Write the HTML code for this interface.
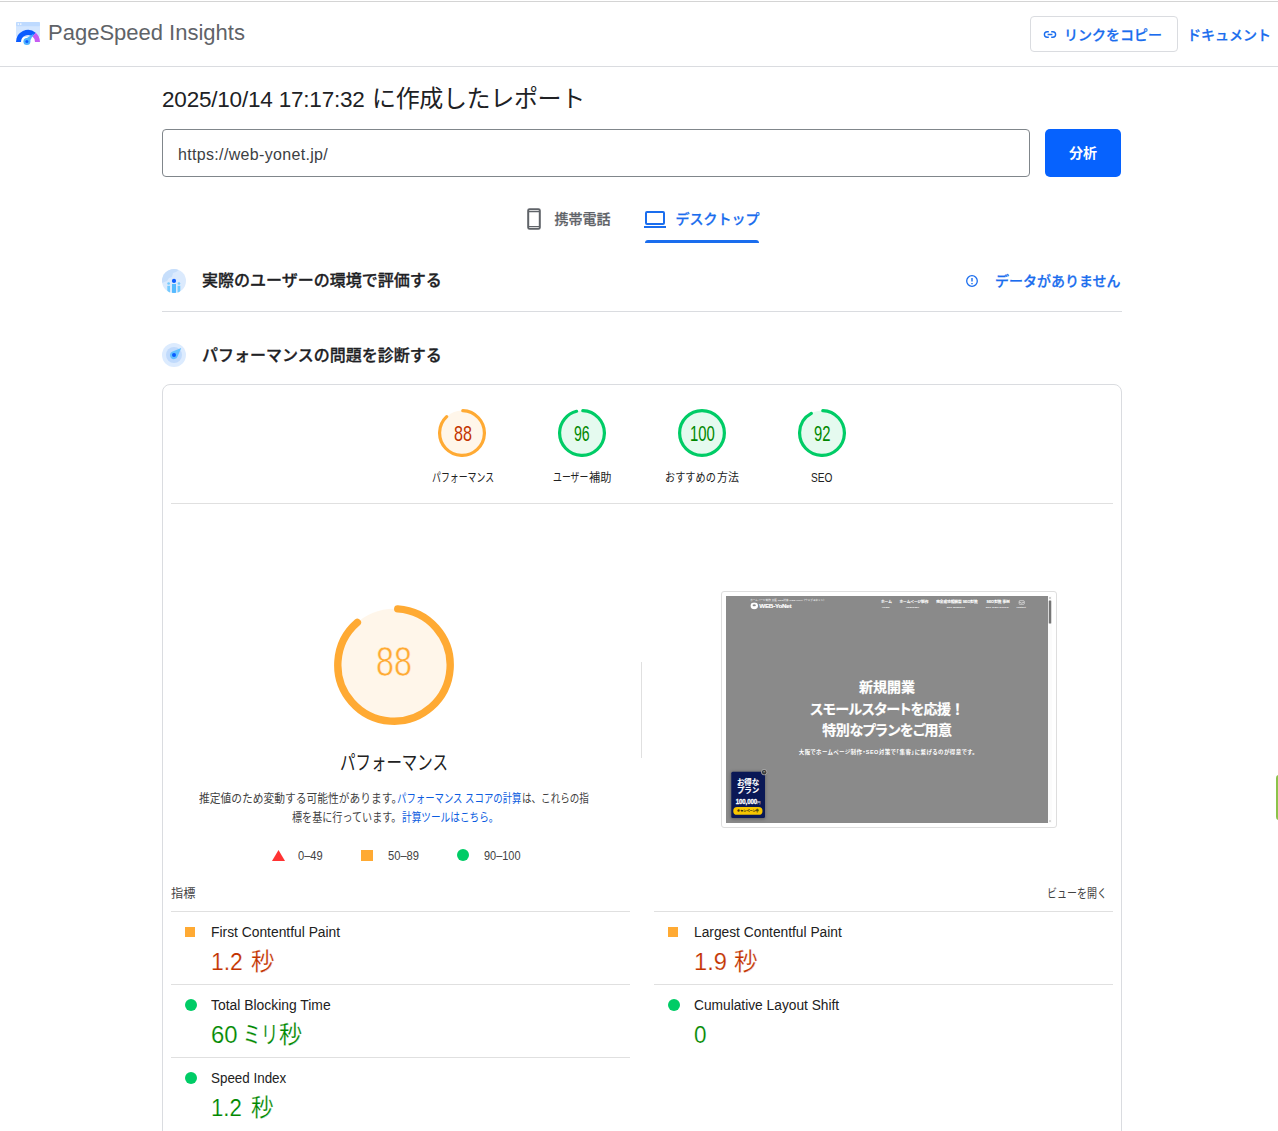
<!DOCTYPE html>
<html lang="ja">
<head>
<meta charset="utf-8">
<title>PageSpeed Insights</title>
<style>
*{box-sizing:border-box;margin:0;padding:0}
html,body{width:1278px;height:1131px;overflow:hidden;background:#fff}
body{position:relative;font-family:"Liberation Sans","Noto Sans CJK JP",sans-serif;color:#202124}
.abs{position:absolute;white-space:nowrap}
.topline{left:0;top:1px;width:1278px;height:1px;background:#d4d4d4}
.hdr{left:0;top:0;width:1278px;height:67px;border-bottom:1px solid #dadce0}
.brand{left:48px;top:19px;font-size:22px;line-height:28px;color:#5f6368}
.btn-copy{left:1030px;top:16px;width:148px;height:36px;border:1px solid #dadce0;border-radius:4px}
.blue{color:#1a6dee}
.t14m{font-size:14px;font-weight:500;line-height:20px;-webkit-text-stroke:.25px}
.title{left:162px;top:83px;font-size:24px;line-height:32px;color:#202124}
.urlbox{left:162px;top:129px;width:868px;height:48px;border:1px solid #80868b;border-radius:4px}
.url{left:178px;top:145px;font-size:16px;line-height:20px;color:#3c4043;letter-spacing:.33px}
.analyze{left:1045px;top:129px;width:76px;height:48px;background:#0662fe;border-radius:5px;color:#fff;font-size:14px;font-weight:700;line-height:48px;text-align:center}
.tabline{left:645px;top:240px;width:114px;height:3px;background:#1a6dee;border-radius:3px 3px 0 0}
.sect{font-size:16px;font-weight:500;line-height:24px;color:#202124;-webkit-text-stroke:.3px}
.hr{height:1px;background:#dadce0}
.card{left:162px;top:384px;width:960px;height:800px;border:1px solid #dadce0;border-radius:8px}
.lh{font-family:"Liberation Sans","Noto Sans CJK JP",sans-serif}
.glabel{font-size:12px;line-height:16px;color:#212121;text-align:center;transform-origin:50% 50%}
.gnum{font-size:21.5px;line-height:24px;text-align:center}
.mtitle{font-size:14px;line-height:20px;color:#212121}
.mval{font-size:24px;line-height:30px;-webkit-text-stroke:.2px #fff}
.avg{color:#c33300}
.pass{color:#080}
.sq{width:11px;height:11px;background:#ffa400}
.dot{width:12px;height:12px;background:#0cce6b;border-radius:50%}
.sx{transform-origin:0 50%}
.desc{font-size:12px;line-height:16px;color:#424242}
.lnk{color:#0b5ce0}
.leg{font-size:12px;line-height:16px;color:#424242}
.msep{width:459px;height:1px;background:#e0e0e0}
.mdot{width:12px;height:12px;border-radius:50%;background:#0c6}
.thumb{left:726px;top:596px;width:1304px;height:908px;overflow:hidden;transform:scale(.25);transform-origin:0 0;font-family:"Liberation Sans","Noto Sans CJK JP",sans-serif}
.tw{color:#fff}
.nav{top:14px;font-size:14.5px;line-height:18px;font-weight:700;-webkit-text-stroke:.4px}
.navs{top:39px;font-size:9.5px;line-height:12px;font-weight:700;letter-spacing:.5px}
.hl{left:0;width:1288px;text-align:center;font-size:56px;line-height:76px;font-weight:700;font-feature-settings:"palt" 1;-webkit-text-stroke:.8px}
.bd{left:21px;width:135px;text-align:center;font-weight:700}
</style>
<style id="pos">
#g1{left:453.6px;top:421.9px;transform:scaleX(0.752)}
#g2{left:574.1px;top:421.9px;transform:scaleX(0.654)}
#g3{left:689.7px;top:421.9px;transform:scaleX(0.691)}
#g4{left:813.5px;top:421.9px;transform:scaleX(0.688)}
#gl1{left:431.7px;top:469.9px;transform:scaleX(0.741)}
#gl2a{left:552.7px;top:469.9px;transform:scaleX(0.740)}
#gl2b{left:588.9px;top:469.9px;transform:scaleX(0.929)}
#gl3a{left:664.5px;top:469.9px;transform:scaleX(0.848)}
#gl3b{left:716.5px;top:469.9px;transform:scaleX(0.912)}
#gl4{left:811.2px;top:469.9px;transform:scaleX(0.844)}
#bignum{left:375.7px;top:636.5px;transform:scaleX(0.769)}
#bigtitle{left:340.0px;top:750.0px;transform:scaleX(0.773)}
#d1a{left:199.0px;top:790.8px;transform:scaleX(0.896)}
#d1b{left:397.1px;top:790.8px;transform:scaleX(0.782)}
#d1c{left:521.9px;top:790.8px;transform:scaleX(0.796)}
#d2a{left:292.0px;top:810.3px;transform:scaleX(0.840)}
#d2b{left:402.4px;top:810.3px;transform:scaleX(0.804)}
#lg1{left:298.1px;top:848.3px;transform:scaleX(0.926)}
#lg2{left:388.0px;top:848.3px;transform:scaleX(0.930)}
#lg3{left:483.9px;top:848.3px;transform:scaleX(0.912)}
#mh1{left:171.0px;top:886.0px;transform:scaleX(1.017)}
#mh2{left:1046.7px;top:886.0px;transform:scaleX(0.834)}
#m1t{left:210.6px;top:922.0px;transform:scaleX(0.988)}
#m1v{left:211.0px;top:946.8px;transform:scaleX(0.955)}
#m1u{left:251.0px;top:947.2px;transform:scaleX(0.978)}
#m2t{left:693.6px;top:922.0px;transform:scaleX(0.984)}
#m2v{left:694.0px;top:946.8px;transform:scaleX(0.987)}
#m2u{left:734.0px;top:947.2px;transform:scaleX(0.983)}
#m3t{left:210.8px;top:995.0px;transform:scaleX(0.992)}
#m3v{left:210.5px;top:1019.8px;transform:scaleX(0.996)}
#m3k{left:243.2px;top:1020.2px;transform:scaleX(0.737)}
#m3u{left:278.6px;top:1020.2px;transform:scaleX(0.962)}
#m4t{left:694.4px;top:995.0px;transform:scaleX(0.982)}
#m4v{left:694.2px;top:1019.8px;transform:scaleX(0.938)}
#m5t{left:210.5px;top:1068.0px;transform:scaleX(0.957)}
#m5v{left:211.1px;top:1092.8px;transform:scaleX(0.925)}
#m5u{left:251.0px;top:1093.2px;transform:scaleX(0.938)}
</style>
</head>
<body>
<!-- header -->
<div class="abs hdr"></div>
<div class="abs topline"></div>
<svg class="abs" style="left:16px;top:22px" width="24" height="24" viewBox="0 0 24 24">
  <rect x="0" y="0" width="24" height="15" rx="1.2" fill="#d3e6ff"/>
  <rect x="0" y="0" width="24" height="4.2" rx="1.2" fill="#bedaff"/>
  <circle cx="2.3" cy="2.1" r="0.8" fill="#fff"/><circle cx="4.8" cy="2.1" r="0.8" fill="#fff"/>
  <path d="M2.500 20 A9.500 9.500 0 0 1 18.100 12.700" fill="none" stroke="#0b5cff" stroke-width="5"/>
  <path d="M18.100 12.700 A9.500 9.500 0 0 1 21.500 20" fill="none" stroke="#c65cf2" stroke-width="5"/>
  <path d="M17.900 11.500 L13.300 20.300 L9.400 17.100 Z" fill="#4fb3ff"/>
  <circle cx="10.900" cy="19.600" r="3.500" fill="#4fb3ff"/>
  <circle cx="10.900" cy="19.600" r="1.500" fill="#0b5cff"/>
</svg>
<div class="abs brand" id="brand">PageSpeed Insights</div>
<div class="abs btn-copy"></div>
<svg class="abs" style="left:1042.5px;top:29.5px" width="14" height="9" viewBox="0 0 14 9"><path d="M5.800 1.700H4.200a2.800 2.800 0 0 0 0 5.600h1.600M8.200 1.700h1.600a2.800 2.800 0 0 1 0 5.600H8.200M4.600 4.500h4.800" fill="none" stroke="#1a6dee" stroke-width="1.4"/></svg>
<div class="abs t14m blue" id="copy" style="left:1064px;top:25px">リンクをコピー</div>
<div class="abs t14m blue" id="docs" style="left:1187px;top:25px">ドキュメント</div>

<!-- title / url -->
<div class="abs title" id="title"><span id="tl" style="font-size:22.5px;letter-spacing:-.2px">2025/10/14 17:17:32</span><span id="tj" class="abs" style="left:210px;top:0;letter-spacing:-.35px">に作成したレポート</span></div>
<div class="abs urlbox"></div>
<div class="abs url" id="url">https://web-yonet.jp/</div>
<div class="abs analyze" id="analyze">分析</div>

<!-- tabs -->
<svg class="abs" style="left:526px;top:208px" width="16" height="22" viewBox="0 0 16 22"><rect x="2.200" y="1.200" width="11.600" height="19.600" rx="1.400" fill="none" stroke="#5f6368" stroke-width="2"/><path d="M2 3.550h12M2 18.450h12" stroke="#5f6368" stroke-width="1.150"/></svg>
<div class="abs t14m" id="tab1" style="left:554.5px;top:209px;color:#5f6368">携帯電話</div>
<svg class="abs" style="left:643px;top:210px" width="24" height="19" viewBox="0 0 24 19"><rect x="3" y="2" width="18" height="12" rx="1" fill="none" stroke="#1a6dee" stroke-width="2"/><path d="M1 17h22" stroke="#1a6dee" stroke-width="2"/></svg>
<div class="abs t14m blue" id="tab2" style="left:675.5px;top:209px">デスクトップ</div>
<div class="abs tabline"></div>

<!-- section headers -->
<svg class="abs" style="left:162px;top:269px" width="24" height="24" viewBox="0 0 24 24">
  <defs><clipPath id="c1"><circle cx="12" cy="12" r="12"/></clipPath></defs>
  <circle cx="12" cy="12" r="12" fill="#dbeafd"/>
  <g clip-path="url(#c1)">
    <path d="M0 0H18L14 3 11 4 10 8 7 9 5 12 0 14Z" fill="#c6defb"/>
    <rect x="5.300" y="16.800" width="2.700" height="8" fill="#74caff"/><circle cx="6.650" cy="14.500" r="1.350" fill="#74caff"/>
    <rect x="15.600" y="16.800" width="2.700" height="8" fill="#74caff"/><circle cx="16.950" cy="14.500" r="1.350" fill="#74caff"/>
    <rect x="10" y="15" width="4" height="10" fill="#55baff"/>
    <circle cx="12" cy="11.900" r="2.100" fill="#0b5cff"/>
  </g>
</svg>
<div class="abs sect" id="s1" style="left:202px;top:269px">実際のユーザーの環境で評価する</div>
<svg class="abs" style="left:965px;top:274px" width="14" height="14" viewBox="0 0 14 14"><circle cx="7" cy="7" r="5.3" fill="none" stroke="#1a6dee" stroke-width="1.3"/><path d="M7 4v3.6M7 9v1.3" stroke="#1a6dee" stroke-width="1.4"/></svg>
<div class="abs t14m blue" id="nodata" style="left:995px;top:271px">データがありません</div>
<div class="abs hr" style="left:162px;top:311px;width:960px"></div>

<svg class="abs" style="left:162px;top:343px" width="24" height="24" viewBox="0 0 24 24">
  <circle cx="12" cy="12" r="12" fill="#dcebfe"/>
  <circle cx="12" cy="12" r="8" fill="#c0dafc"/>
  <path d="M19.2 5 L15.6 13.6 A4 4 0 1 1 10.6 8.4 Z" fill="#62c0ff"/>
  <circle cx="12" cy="12" r="2" fill="#0b5cff"/>
</svg>
<div class="abs sect" id="s2" style="left:202px;top:344px">パフォーマンスの問題を診断する</div>

<div class="abs card"></div>
<!-- score gauges row -->
<svg class="abs" style="left:438px;top:409px" width="48" height="48" viewBox="0 0 120 120"><circle cx="60" cy="60" r="56" fill="#fa3" opacity=".1"/><circle cx="60" cy="60" r="56" fill="none" stroke="#fa3" stroke-width="8" stroke-linecap="round" stroke-dasharray="305.6 352" transform="rotate(-87.95 60 60)"/></svg>
<svg class="abs" style="left:558px;top:409px" width="48" height="48" viewBox="0 0 120 120"><circle cx="60" cy="60" r="56" fill="#0c6" opacity=".1"/><circle cx="60" cy="60" r="56" fill="none" stroke="#0c6" stroke-width="8" stroke-linecap="round" stroke-dasharray="333.8 352" transform="rotate(-87.95 60 60)"/></svg>
<svg class="abs" style="left:678px;top:409px" width="48" height="48" viewBox="0 0 120 120"><circle cx="60" cy="60" r="56" fill="#0c6" opacity=".1"/><circle cx="60" cy="60" r="56" fill="none" stroke="#0c6" stroke-width="8"/></svg>
<svg class="abs" style="left:798px;top:409px" width="48" height="48" viewBox="0 0 120 120"><circle cx="60" cy="60" r="56" fill="#0c6" opacity=".1"/><circle cx="60" cy="60" r="56" fill="none" stroke="#0c6" stroke-width="8" stroke-linecap="round" stroke-dasharray="319.7 352" transform="rotate(-87.95 60 60)"/></svg>
<span class="abs sx gnum avg" id="g1">88</span>
<span class="abs sx gnum pass" id="g2">96</span>
<span class="abs sx gnum pass" id="g3">100</span>
<span class="abs sx gnum pass" id="g4">92</span>
<span class="abs sx glabel" id="gl1">パフォーマンス</span>
<span class="abs sx glabel" id="gl2a">ユーザー</span><span class="abs sx glabel" id="gl2b">補助</span>
<span class="abs sx glabel" id="gl3a">おすすめの</span><span class="abs sx glabel" id="gl3b">方法</span>
<span class="abs sx glabel" id="gl4">SEO</span>
<div class="abs" style="left:171px;top:503px;width:942px;height:1px;background:#e0e0e0"></div>

<!-- big gauge -->
<svg class="abs" style="left:333.5px;top:604.5px" width="120" height="120" viewBox="0 0 120 120"><circle cx="60" cy="60" r="56.2" fill="#fa3" opacity=".1"/><circle cx="60" cy="60" r="56.2" fill="none" stroke="#fa3" stroke-width="7.4" stroke-linecap="round" stroke-dasharray="309 354" transform="rotate(-86.2 60 60)"/></svg>
<span class="abs sx" id="bignum" style="font-size:42px;line-height:50px;color:#fa3;-webkit-text-stroke:.55px #fff6ea">88</span>
<span class="abs sx" id="bigtitle" style="font-size:20px;line-height:26px;color:#212121">パフォーマンス</span>
<span class="abs sx desc" id="d1a">推定値のため変動する可能性があります。</span>
<span class="abs sx desc lnk" id="d1b">パフォーマンス スコアの計算</span>
<span class="abs sx desc" id="d1c">は、これらの指</span>
<span class="abs sx desc" id="d2a">標を基に行っています。</span>
<span class="abs sx desc lnk" id="d2b">計算ツールはこちら。</span>
<svg class="abs" style="left:271.5px;top:849.5px" width="13" height="11" viewBox="0 0 13 11"><path d="M6.5 0L13 11H0Z" fill="#f33"/></svg>
<div class="abs" style="left:361px;top:850px;width:12px;height:11px;background:#fa3"></div>
<div class="abs" style="left:457px;top:849px;width:12px;height:12px;border-radius:50%;background:#0c6"></div>
<span class="abs sx leg" id="lg1">0–49</span>
<span class="abs sx leg" id="lg2">50–89</span>
<span class="abs sx leg" id="lg3">90–100</span>
<div class="abs" style="left:641px;top:662px;width:1px;height:96px;background:#e0e0e0"></div>

<!-- final screenshot thumbnail -->
<div class="abs" style="left:721px;top:591px;width:336px;height:237px;border:1px solid #dedede;border-radius:3px;background:#fff"></div>
<div class="abs thumb" id="thumb">
  <div class="abs" style="left:0;top:0;width:1288px;height:908px;background:#8a8a8a"></div>
  <div class="abs tw" style="left:97px;top:9px;font-size:10px;line-height:12px;letter-spacing:.4px">ホームページ制作 大阪 SEO対策 WEBYoNet（ウェブヨネット）</div>
  <svg class="abs" style="left:97px;top:25px" width="32" height="30" viewBox="0 0 32 30"><ellipse cx="16" cy="14" rx="15" ry="13.5" fill="#fff"/><path d="M9 11q7-7 14 0q-3 8-7 4q-4 4-7-4z" fill="#8a8a8a"/><path d="M12 27l4-5 4 5z" fill="#fff"/></svg>
  <div class="abs tw" id="tlogo" style="left:133px;top:24px;font-size:25px;line-height:32px;font-weight:700;letter-spacing:-.9px;-webkit-text-stroke:.6px">WEB-YoNet</div>
  <div class="abs tw nav" id="n1" style="left:620px">ホーム</div><div class="abs tw navs" id="n1s" style="left:624px">HOME</div>
  <div class="abs tw nav" id="n2" style="left:694px">ホームページ制作</div><div class="abs tw navs" id="n2s" style="left:720px">Homepage</div>
  <div class="abs tw nav" id="n3" style="left:841px">完全成功報酬型 SEO対策</div><div class="abs tw navs" id="n3s" style="left:883px">SEO measures</div>
  <div class="abs tw nav" id="n4" style="left:1042px">SEO対策 事例</div><div class="abs tw navs" id="n4s" style="left:1039px">SEO Track Record</div>
  <svg class="abs" style="left:1170px;top:17px" width="25" height="18" viewBox="0 0 25 18"><rect x="1.5" y="1.5" width="22" height="15" rx="4" fill="none" stroke="#fff" stroke-width="2.6"/><path d="M2 7l10.500 4.500L23 7" fill="none" stroke="#fff" stroke-width="2.4"/></svg>
  <div class="abs tw navs" id="n5s" style="left:1162px">contact</div>
  <div class="abs tw hl" id="h1" style="top:328px">新規開業</div>
  <div class="abs tw hl" id="h2" style="top:413px;letter-spacing:-2.2px">スモールスタートを応援<span style="font-feature-settings:normal">！</span></div>
  <div class="abs tw hl" id="h3" style="top:497px;letter-spacing:-1.8px">特別なプランをご用意</div>
  <div class="abs tw" id="h4" style="left:0;width:1288px;text-align:center;top:611px;font-size:22px;line-height:28px;font-weight:700;letter-spacing:1.9px;font-feature-settings:'palt' 1">大阪でホームページ制作・SEO対策で「集客」に繋げるのが得意です。</div>
  <div class="abs" style="left:21px;top:703px;width:135px;height:185px;background:#0a1856;border-radius:6px;box-shadow:0 4px 14px rgba(0,0,0,.35)"></div>
  <div class="abs tw bd" style="top:727px;font-size:30px;line-height:34px;-webkit-text-stroke:.5px">お得な</div>
  <div class="abs tw bd" style="top:761px;font-size:30px;line-height:34px;-webkit-text-stroke:.5px">プラン</div>
  <div class="abs tw bd" style="top:804px;font-size:29px;line-height:34px;letter-spacing:-.5px"><b style="display:inline-block;transform:scaleX(.84);transform-origin:50% 50%;margin:0 -8px;-webkit-text-stroke:1.2px">100,000</b><span style="font-size:14px;font-weight:500">円</span></div>
  <div class="abs" style="left:29px;top:844px;width:117px;height:31px;background:#f7c600;border-radius:16px;color:#111;font-size:12.5px;font-weight:700;line-height:31px;text-align:center;-webkit-text-stroke:.5px">キャンペーン中</div>
  <div class="abs" style="left:140px;top:692px;width:25px;height:25px;border-radius:50%;background:#3a3a3a;border:3px solid #bdbdbd;color:#ddd;font-size:16px;line-height:18px;text-align:center">×</div>
  <div class="abs" style="left:1288px;top:0;width:16px;height:908px;background:#fbfbfb"></div>
  <div class="abs" style="left:1291px;top:18px;width:10px;height:92px;background:#767676;border-radius:2px"></div>
  <svg class="abs" style="left:1291px;top:3px" width="10" height="8" viewBox="0 0 10 8"><path d="M5 1L9 7H1Z" fill="#7a7a7a"/></svg>
  <svg class="abs" style="left:1291px;top:897px" width="10" height="8" viewBox="0 0 10 8"><path d="M5 7L9 1H1Z" fill="#9a9a9a"/></svg>
</div>


<!-- metrics -->
<span class="abs sx" id="mh1" style="font-size:12px;line-height:16px;color:#424242">指標</span>
<span class="abs sx" id="mh2" style="font-size:12px;line-height:16px;color:#424242">ビューを開く</span>
<div class="abs msep" style="left:171px;top:911px"></div>
<div class="abs msep" style="left:171px;top:984px"></div>
<div class="abs msep" style="left:171px;top:1057px"></div>
<div class="abs msep" style="left:654px;top:911px"></div>
<div class="abs msep" style="left:654px;top:984px"></div>
<div class="abs" style="left:185px;top:927px;width:10px;height:10px;background:#fa3"></div>
<div class="abs" style="left:668px;top:927px;width:10px;height:10px;background:#fa3"></div>
<div class="abs mdot" style="left:185px;top:999px"></div>
<div class="abs mdot" style="left:668px;top:999px"></div>
<div class="abs mdot" style="left:185px;top:1072px"></div>
<span class="abs sx mtitle" id="m1t">First Contentful Paint</span>
<span class="abs sx mval avg" id="m1v">1.2</span><span class="abs sx mval avg" id="m1u">秒</span>
<span class="abs sx mtitle" id="m2t">Largest Contentful Paint</span>
<span class="abs sx mval avg" id="m2v">1.9</span><span class="abs sx mval avg" id="m2u">秒</span>
<span class="abs sx mtitle" id="m3t">Total Blocking Time</span>
<span class="abs sx mval pass" id="m3v">60</span><span class="abs sx mval pass" id="m3k">ミリ</span><span class="abs sx mval pass" id="m3u">秒</span>
<span class="abs sx mtitle" id="m4t">Cumulative Layout Shift</span>
<span class="abs sx mval pass" id="m4v">0</span>
<span class="abs sx mtitle" id="m5t">Speed Index</span>
<span class="abs sx mval pass" id="m5v">1.2</span><span class="abs sx mval pass" id="m5u">秒</span>

<!-- right-edge floating tab -->
<div class="abs" style="left:1276px;top:775px;width:4px;height:45px;background:#8bc34a;border-radius:3px 0 0 3px"></div>

</body>
</html>
